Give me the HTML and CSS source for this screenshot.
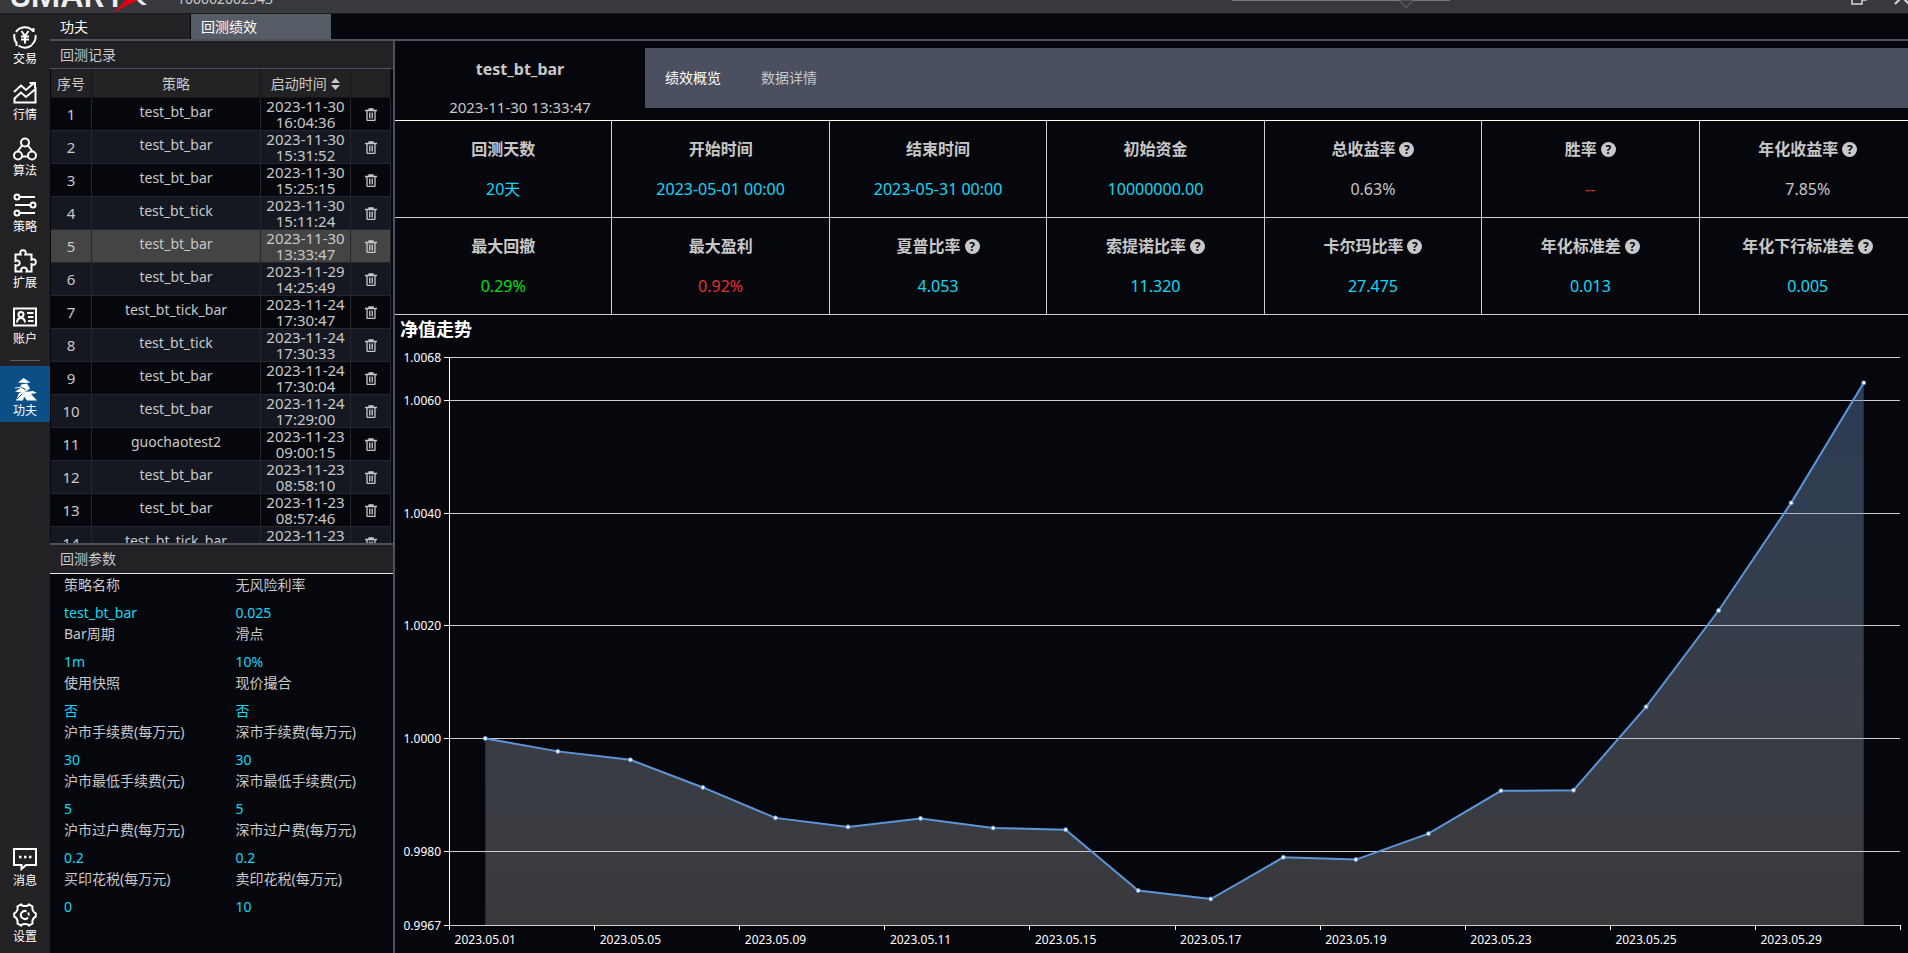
FILE: index.html
```
<!DOCTYPE html>
<html lang="zh">
<head>
    <meta charset="UTF-8">
    <meta name="viewport" content="width=device-width, initial-scale=1.0">
    <title>回测绩效</title>
    <link rel="stylesheet" href="styles.css">
</head>
<body>
    <svg class="symbols" aria-hidden="true">
        <symbol id="icon-trash" viewBox="0 0 12 13">
            <path d="M0 2.500h12M4 2.500V1h4v1.500M2 3v8.500q0 1 1 1h6q1 0 1-1V3" fill="none" stroke="currentColor" stroke-width="1.300"/>
            <path d="M4.500 4.500v6M6 4.500v6M7.500 4.500v6" stroke="currentColor" stroke-width="0.900"/>
        </symbol>
    </svg>

    <header class="topbar">
        <div class="logo">
            <span class="logo-text">SMART</span>
            <svg class="logo-mark" width="36" height="24" viewBox="0 0 36 24">
                <path d="M20 8l9 8h5l-9-8z" fill="#e8e8e8"/>
                <path d="M0 24L16 8h16Q14 16 0 24z" fill="#e60012"/>
            </svg>
        </div>
        <span class="account">100062002543</span>
        <div class="search-edge">
            <svg width="14" height="8" viewBox="0 0 14 8"><path d="M0 0.5l7 7l7-7" fill="#38393d" stroke="#77797d"/></svg>
        </div>
        <div class="window-buttons">
            <button class="window-button" aria-label="还原">
                <svg width="16" height="16" viewBox="0 0 16 16" fill="none" stroke="#d8d8d8" stroke-width="1.5"><path d="M1 4h10v11H1zM4 4V1h11v10h-4"/></svg>
            </button>
            <button class="window-button" aria-label="关闭">
                <svg width="16" height="16" viewBox="0 0 16 16" fill="none" stroke="#d8d8d8" stroke-width="2"><path d="M1 1l14 14M15 1L1 15"/></svg>
            </button>
        </div>
    </header>

    <div class="app">
        <nav class="sidebar">
            <a href="#" class="nav-item">
                <svg viewBox="0 0 24 24"><path d="M3 7a10.500 10.500 0 0 1 17-1M22.500 10a10.500 10.500 0 0 1-3.500 9.500M4 18.500A10.500 10.500 0 0 1 1.500 9M5.500 20.500a10.500 10.500 0 0 0 13.500-.5M20.500 3v4M3.500 21v-4"/><path d="M8.500 6l3.500 5 3.500-5M12 11v7.500M8 11.500h8M8 14.500h8"/></svg>
                <span>交易</span>
            </a>
            <a href="#" class="nav-item">
                <svg viewBox="0 0 24 24"><path d="M1 11l7-6.500 5 4.500 8.500-7.500M16.500 2H22v5"/><path d="M1.500 21.500v-4l6.500-6 5 4.500 9.500-8v13.500z"/></svg>
                <span>行情</span>
            </a>
            <a href="#" class="nav-item">
                <svg viewBox="0 0 24 24"><circle cx="12" cy="5.500" r="4"/><circle cx="5" cy="18.500" r="4"/><circle cx="19" cy="18.500" r="4"/><path d="M9 8.500L4.500 14.500M15 8.500l4.500 6M9 19.500h6"/></svg>
                <span>算法</span>
            </a>
            <a href="#" class="nav-item">
                <svg viewBox="0 0 24 24"><circle cx="4" cy="4" r="2.500"/><circle cx="20" cy="12" r="2.500"/><circle cx="4" cy="20" r="2.500"/><path d="M7 4h15M2 12h15M7 20h15"/></svg>
                <span>策略</span>
            </a>
            <a href="#" class="nav-item">
                <svg viewBox="0 0 24 24"><path d="M2.500 5.500h5.200C6.500 2.500 8 1.200 10 1.200s3.500 1.300 2.300 4.300h6.200v5.300c3-1.200 4.300.2 4.300 2.200s-1.300 3.400-4.300 2.200v7.300h-5c1.200-3-.8-4-2.500-4s-3.700 1-2.500 4h-6v-6.200c3 .9 4.200-.8 4.200-2.300S5.500 10.800 2.500 12z"/></svg>
                <span>扩展</span>
            </a>
            <a href="#" class="nav-item">
                <svg viewBox="0 0 24 24"><path d="M1 3.500h22v17H1z"/><circle cx="8" cy="9.500" r="2.500"/><path d="M4 17.500c.5-6 7.500-6 8 0M14 8h6.500M15 12h5.500M15 16h5.500"/></svg>
                <span>账户</span>
            </a>
            <hr class="nav-divider">
            <a href="#" class="nav-item active">
                <svg viewBox="0 0 24 24"><path d="M5 5.500L10.500 1l3 2 4 2.500-5 .5zM8 7.500l6-1 3 5-4 3-4 1-7-1 5-3zM6 16l6-1 8-1 4 2-6 1 6 6.500H14l-3-4-1 4H3z" fill="#fff" stroke="none"/><path d="M2 11l7-1 3 3M10 15l8 5" stroke="#dcecf8" stroke-width="1"/><path d="M8 10l5 3M4 22l5-5" stroke="#0b4f86" stroke-width="1"/></svg>
                <span>功夫</span>
            </a>
            <div class="nav-bottom">
                <a href="#" class="nav-item">
                    <svg viewBox="0 0 24 24"><path d="M1 2h22v16H13l-4.500 4v-4H1z"/><path d="M6 10h2.500M11 10h2.500M16 10h2.500" stroke-width="2.500"/></svg>
                    <span>消息</span>
                </a>
                <a href="#" class="nav-item">
                    <svg viewBox="0 0 24 24"><path d="M8 1.500C9 3.500 15 3.500 16 1.500L19.500 3.500C19 6.500 20 9 22.800 10.500V13.500C20 15 19 17.500 19.500 20.500L16 22.500C15 20.500 9 20.500 8 22.500L4.500 20.500C5 17.500 4 15 1.200 13.500V10.500C4 9 5 6.500 4.500 3.500Z"/><path d="M13.500 8.300a4 4 0 1 0 1.500 6.200M15.800 12.500a4 4 0 0 0-.8-3"/></svg>
                    <span>设置</span>
                </a>
            </div>
        </nav>

        <main class="main">
            <div class="page-tabs">
                <button class="page-tab">功夫</button>
                <button class="page-tab active">回测绩效</button>
            </div>

            <div class="content">
                <aside class="left-panel">
                    <h2 class="panel-title">回测记录</h2>
                    <div class="records">
                        <table class="record-table">
                            <thead>
                                <tr>
                                    <th class="col-index">序号</th>
                                    <th>策略</th>
                                    <th class="col-time">
                                        <button class="sort-button">启动时间
                                            <svg width="9" height="12" viewBox="0 0 9 12" fill="currentColor"><path d="M4.500 0L9 5H0zM4.500 12L0 7h9z"/></svg>
                                        </button>
                                    </th>
                                    <th class="col-delete"></th>
                                </tr>
                            </thead>
                            <tbody id="record-body"></tbody>
                        </table>
                    </div>
                    <section class="params">
                        <h2 class="panel-title">回测参数</h2>
                        <dl class="param-grid">
                            <div><dt>策略名称</dt><dd>test_bt_bar</dd></div>
                            <div><dt>无风险利率</dt><dd>0.025</dd></div>
                            <div><dt>Bar周期</dt><dd>1m</dd></div>
                            <div><dt>滑点</dt><dd>10%</dd></div>
                            <div><dt>使用快照</dt><dd>否</dd></div>
                            <div><dt>现价撮合</dt><dd>否</dd></div>
                            <div><dt>沪市手续费(每万元)</dt><dd>30</dd></div>
                            <div><dt>深市手续费(每万元)</dt><dd>30</dd></div>
                            <div><dt>沪市最低手续费(元)</dt><dd>5</dd></div>
                            <div><dt>深市最低手续费(元)</dt><dd>5</dd></div>
                            <div><dt>沪市过户费(每万元)</dt><dd>0.2</dd></div>
                            <div><dt>深市过户费(每万元)</dt><dd>0.2</dd></div>
                            <div><dt>买印花税(每万元)</dt><dd>0</dd></div>
                            <div><dt>卖印花税(每万元)</dt><dd>10</dd></div>
                        </dl>
                    </section>
                </aside>

                <section class="report">
                    <div class="report-header">
                        <div class="report-name">
                            <h1>test_bt_bar</h1>
                            <time>2023-11-30 13:33:47</time>
                        </div>
                        <div class="report-tabs">
                            <button class="report-tab active">绩效概览</button>
                            <button class="report-tab">数据详情</button>
                        </div>
                    </div>

                    <dl class="metrics">
                        <div class="metric"><dt>回测天数</dt><dd>20天</dd></div>
                        <div class="metric"><dt>开始时间</dt><dd>2023-05-01 00:00</dd></div>
                        <div class="metric"><dt>结束时间</dt><dd>2023-05-31 00:00</dd></div>
                        <div class="metric"><dt>初始资金</dt><dd>10000000.00</dd></div>
                        <div class="metric"><dt>总收益率<button class="help">?</button></dt><dd class="plain">0.63%</dd></div>
                        <div class="metric"><dt>胜率<button class="help">?</button></dt><dd class="red">--</dd></div>
                        <div class="metric"><dt>年化收益率<button class="help">?</button></dt><dd class="plain">7.85%</dd></div>
                        <div class="metric"><dt>最大回撤</dt><dd class="green">0.29%</dd></div>
                        <div class="metric"><dt>最大盈利</dt><dd class="red">0.92%</dd></div>
                        <div class="metric"><dt>夏普比率<button class="help">?</button></dt><dd>4.053</dd></div>
                        <div class="metric"><dt>索提诺比率<button class="help">?</button></dt><dd>11.320</dd></div>
                        <div class="metric"><dt>卡尔玛比率<button class="help">?</button></dt><dd>27.475</dd></div>
                        <div class="metric"><dt>年化标准差<button class="help">?</button></dt><dd>0.013</dd></div>
                        <div class="metric"><dt>年化下行标准差<button class="help">?</button></dt><dd>0.005</dd></div>
                    </dl>

                    <h2 class="chart-title">净值走势</h2>
                    <div class="chart" id="chart"></div>
                </section>
            </div>
        </main>
    </div>

    <script src="app.js"></script>
</body>
</html>
```
FILE: styles.css
```
* {
    box-sizing: border-box;
}

body {
    margin: 0;
    height: 100vh;
    display: flex;
    flex-direction: column;
    overflow: hidden;
    background-color: #06070c;
    color: #c8c8c8;
    font-family: "Noto Sans", "Noto Sans CJK SC", sans-serif;
    font-size: 14px;
}

h1, h2, dl, dd {
    margin: 0;
}

button {
    padding: 0;
    border: none;
    background: none;
    color: inherit;
    font: inherit;
    cursor: pointer;
}

.symbols {
    display: none;
}

/* 顶部栏 */
.topbar {
    flex: none;
    height: 14px;
    display: flex;
    align-items: flex-end;
    overflow: hidden;
    background-color: #38393d;
    border-bottom: 1px solid #1b1c1e;
    padding-left: 10px;
}

.logo {
    display: flex;
    align-items: flex-end;
    width: 167px;
}

.logo-text {
    width: 103px;
    color: #f0f0f0;
    font-family: Inter, sans-serif;
    font-size: 32px;
    font-weight: 600;
    line-height: 32px;
    margin-bottom: 1px;
}

.account {
    line-height: 20px;
    margin-bottom: 4px;
}

.search-edge {
    width: 218px;
    height: 13px;
    margin-left: auto;
    padding-right: 37px;
    border-top: 1px solid #77797d;
    text-align: right;
    line-height: 0;
}

.search-edge svg {
    margin-top: -1px;
}

.window-buttons {
    width: 460px;
    display: flex;
    justify-content: flex-end;
    gap: 27px;
    margin-right: -2px;
    margin-bottom: 8px;
}

.window-button {
    display: flex;
}

.app {
    flex: 1;
    min-height: 0;
    display: flex;
}

/* 侧边导航 */
.sidebar {
    width: 50px;
    display: flex;
    flex-direction: column;
    background-color: #222224;
}

.nav-item {
    height: 56px;
    padding-top: 11px;
    display: flex;
    flex-direction: column;
    align-items: center;
    color: #fff;
    font-size: 12px;
    line-height: 16px;
    text-decoration: none;
}

.nav-item svg {
    width: 24px;
    height: 24px;
    margin-bottom: 2px;
    fill: none;
    stroke: currentColor;
    stroke-width: 2;
}

.nav-item.active {
    background-color: #0b4f86;
}

.nav-divider {
    width: 30px;
    margin: 10px auto 5px;
    border: none;
    border-top: 1px solid #565c66;
}

.nav-bottom {
    margin-top: auto;
    padding-bottom: 5px;
}

.main {
    flex: 1;
    min-width: 0;
    display: flex;
    flex-direction: column;
}

.page-tabs {
    display: flex;
    gap: 1px;
    border-bottom: 2px solid #4d525c;
}

.page-tab {
    width: 140px;
    height: 25px;
    padding: 0 0 2px 10px;
    background-color: #222224;
    color: #fff;
    text-align: left;
}

.page-tab.active {
    background-color: #565c66;
}

.content {
    flex: 1;
    min-height: 0;
    display: flex;
}

/* 左侧面板 */
.left-panel {
    width: 345px;
    display: flex;
    flex-direction: column;
    border-right: 2px solid #4d525c;
}

.panel-title {
    flex: none;
    height: 28px;
    padding-left: 10px;
    background-color: #222224;
    border-bottom: 1px solid #4d525c;
    font-size: 14px;
    font-weight: 400;
    line-height: 27px;
}

.records {
    flex: 1;
    min-height: 0;
    overflow: hidden;
    padding: 0 2px 0 1px;
}

.record-table {
    width: 100%;
    table-layout: fixed;
    border-spacing: 0;
    text-align: center;
}

.record-table th {
    height: 29px;
    padding: 0;
    background-color: #222224;
    border-right: 1px solid #151517;
    border-bottom: 1px solid #151517;
    font-weight: 400;
}

.record-table td {
    height: 33px;
    padding: 0;
    border-right: 1px solid #26272b;
    border-bottom: 1px solid #26272b;
    font-size: 15px;
    line-height: 16px;
}

.record-table tbody tr:nth-child(even) {
    background-color: #151820;
}

.record-table tbody tr.selected {
    background-color: #444;
}

.record-table .cell-name {
    padding-bottom: 4px;
    font-size: 14px;
}

.col-index {
    width: 41px;
}

.col-time {
    width: 90px;
}

.col-delete {
    width: 40px;
}

.sort-button svg {
    margin-left: 1px;
    vertical-align: -1px;
}

.delete-button {
    display: block;
    margin: 0 auto;
}

.delete-button svg {
    display: block;
    width: 12px;
    height: 13px;
}

.params {
    flex: none;
    border-top: 2px solid #4d525c;
    padding-bottom: 36px;
}

.params .panel-title {
    height: 29px;
    border-bottom-color: #e8e8e8;
}

.param-grid {
    display: grid;
    grid-template-columns: 1fr 1fr;
    line-height: 21px;
}

.param-grid div {
    padding-left: 14px;
}

.param-grid dd {
    margin-top: 7px;
    color: #10d8f5;
}

/* 右侧报告 */
.report {
    flex: 1;
    min-width: 0;
    display: flex;
    flex-direction: column;
}

.report-header {
    display: flex;
    height: 80px;
    border-bottom: 1px solid #fff;
}

.report-name {
    width: 250px;
    padding-top: 17px;
    text-align: center;
}

.report-name h1 {
    margin-bottom: 17px;
    font-size: 16px;
    line-height: 22px;
}

.report-name time {
    display: block;
    font-size: 15px;
    line-height: 20px;
}

.report-tabs {
    flex: 1;
    height: 60px;
    margin-top: 7px;
    padding: 0 0 2px 20px;
    display: flex;
    gap: 40px;
    background-color: #4b5060;
}

.report-tab.active {
    color: #fff;
}

/* 指标网格比容器略宽，最右一列的边线不显示 */
.metrics {
    display: grid;
    grid-template-columns: repeat(7, 1fr);
    margin-right: -9px;
    text-align: center;
}

.metric {
    height: 97px;
    padding-top: 16px;
    border-right: 1px solid #d0d0d0;
    border-bottom: 1px solid #d0d0d0;
    font-size: 16px;
    line-height: 24px;
}

.metric dt {
    margin-bottom: 16px;
    display: flex;
    align-items: center;
    justify-content: center;
    gap: 4px;
    font-weight: 700;
}

.metric dd {
    color: #10d8f5;
}

.metric .plain {
    color: #c8c8c8;
}

.metric .red {
    color: #e83030;
}

.metric .green {
    color: #00e010;
}

.help {
    width: 15px;
    height: 15px;
    border-radius: 50%;
    background-color: #c8c8c8;
    color: #06070c;
    font-size: 12px;
    font-weight: 700;
    line-height: 15px;
}

/* 净值曲线 */
.chart-title {
    padding: 1px 0 0 5px;
    color: #fff;
    font-size: 18px;
    line-height: 26px;
}

.chart {
    flex: 1;
    min-height: 0;
}

.chart svg {
    display: block;
}

.chart text {
    fill: #fff;
    font-size: 12px;
}

.grid-line {
    stroke: #ccc;
}

.axis-line {
    stroke: #fff;
}

.value-line {
    fill: none;
    stroke: #5c96d8;
    stroke-width: 2;
}

.value-point {
    fill: #fff;
    stroke: #5c96d8;
}
```
FILE: app.js
```
const records = [
    ['test_bt_bar', '2023-11-30', '16:04:36'],
    ['test_bt_bar', '2023-11-30', '15:31:52'],
    ['test_bt_bar', '2023-11-30', '15:25:15'],
    ['test_bt_tick', '2023-11-30', '15:11:24'],
    ['test_bt_bar', '2023-11-30', '13:33:47'],
    ['test_bt_bar', '2023-11-29', '14:25:49'],
    ['test_bt_tick_bar', '2023-11-24', '17:30:47'],
    ['test_bt_tick', '2023-11-24', '17:30:33'],
    ['test_bt_bar', '2023-11-24', '17:30:04'],
    ['test_bt_bar', '2023-11-24', '17:29:00'],
    ['guochaotest2', '2023-11-23', '09:00:15'],
    ['test_bt_bar', '2023-11-23', '08:58:10'],
    ['test_bt_bar', '2023-11-23', '08:57:46'],
    ['test_bt_tick_bar', '2023-11-23', '08:57:20']
];
const selectedIndex = 4;

document.getElementById('record-body').innerHTML = records.map(([name, date, time], i) => `
    <tr class="${i === selectedIndex ? 'selected' : ''}">
        <td>${i + 1}</td>
        <td class="cell-name">${name}</td>
        <td>${date}<br>${time}</td>
        <td><button class="delete-button" aria-label="删除"><svg><use href="#icon-trash"/></svg></button></td>
    </tr>`).join('');

const values = [
    1.0000, 0.99977, 0.99962, 0.99913, 0.99859, 0.99843, 0.99858, 0.99841, 0.99838, 0.99730,
    0.99715, 0.99789, 0.99785, 0.99831, 0.99907, 0.99908, 1.00056, 1.00227, 1.00418, 1.00631
];
const dates = ['05.01', '05.05', '05.09', '05.11', '05.15', '05.17', '05.19', '05.23', '05.25', '05.29'];
const minValue = 0.99668;
const maxValue = 1.00676;
const ticks = [maxValue, 1.006, 1.004, 1.002, 1, 0.998, minValue];

// 按容器大小绘制净值曲线
function drawChart() {
    const chart = document.getElementById('chart');
    const width = chart.clientWidth;
    const height = chart.clientHeight;
    const left = 54, right = width - 8, top = 15, bottom = height - 28;
    const step = (right - left) / values.length;
    const x = i => left + step * (i + 0.5);
    const y = v => bottom - (v - minValue) / (maxValue - minValue) * (bottom - top);
    const snap = n => Math.round(n) + 0.5;

    let svg = `<svg width="${width}" height="${height}">
        <defs><linearGradient id="area" x1="0" y1="0" x2="0" y2="1">
            <stop offset="0" stop-color="rgb(97,138,194)" stop-opacity="0.4"/>
            <stop offset="1" stop-color="rgb(211,208,204)" stop-opacity="0.25"/>
        </linearGradient></defs>`;

    ticks.forEach(v => {
        const ty = snap(y(v));
        svg += `<line class="grid-line" x1="${left}" y1="${ty}" x2="${right}" y2="${ty}"/>`;
        svg += `<line class="axis-line" x1="${left - 5}" y1="${ty}" x2="${left}" y2="${ty}"/>`;
        svg += `<text x="${left - 8}" y="${ty + 4}" text-anchor="end">${v.toFixed(4)}</text>`;
    });
    svg += `<line class="axis-line" x1="${left + 0.5}" y1="${top}" x2="${left + 0.5}" y2="${bottom}"/>`;

    for (let i = 0; i <= values.length; i += 2) {
        const tx = snap(left + step * i);
        svg += `<line class="axis-line" x1="${tx}" y1="${bottom}" x2="${tx}" y2="${bottom + 5}"/>`;
    }
    dates.forEach((d, i) => {
        svg += `<text x="${x(i * 2)}" y="${bottom + 19}" text-anchor="middle">2023.${d}</text>`;
    });

    const points = values.map((v, i) => `${x(i)},${y(v) + 0.5}`);
    svg += `<polygon fill="url(#area)" points="${x(0)},${bottom} ${points.join(' ')} ${x(values.length - 1)},${bottom}"/>`;
    svg += `<polyline class="value-line" points="${points.join(' ')}"/>`;
    values.forEach((v, i) => {
        svg += `<circle class="value-point" cx="${x(i)}" cy="${y(v) + 0.5}" r="2"/>`;
    });
    chart.innerHTML = svg + '</svg>';
}

drawChart();
window.addEventListener('resize', drawChart);
```
